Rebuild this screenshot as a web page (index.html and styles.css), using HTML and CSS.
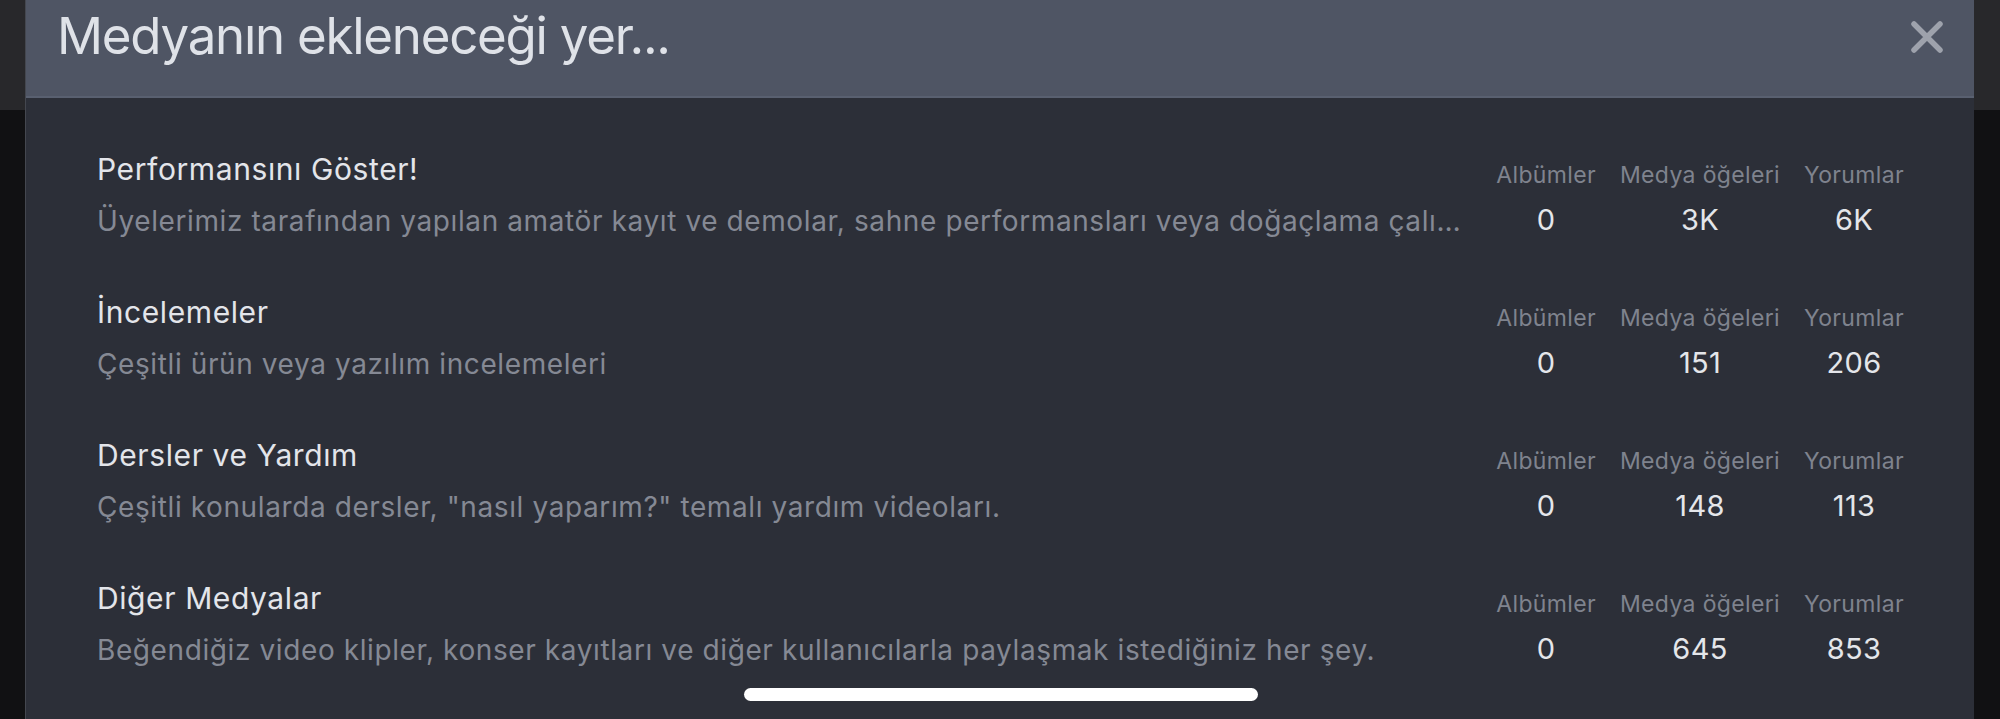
FILE: index.html
```
<!DOCTYPE html>
<html lang="tr">
<head>
<meta charset="utf-8">
<title>Medyanın ekleneceği yer...</title>
<link rel="stylesheet" href="styles.css">
</head>
<body>
<div class="backdrop">
  <div class="backdrop-bar"></div>
</div>
<div class="modal">
  <div class="modal-header">
    <h1 class="modal-title">Medyanın ekleneceği yer...</h1>
    <span class="close" aria-label="Kapat">
      <svg viewBox="0 0 34 34" width="34" height="34"><path d="M4 4 L30 30 M30 4 L4 30" stroke="#9ea2ac" stroke-width="5.5" stroke-linecap="round" fill="none"/></svg>
    </span>
  </div>
  <div class="modal-body">
    <div class="row">
      <div class="main">
        <div class="row-title">Performansını Göster!</div>
        <div class="row-desc">Üyelerimiz tarafından yapılan amatör kayıt ve demolar, sahne performansları veya doğaçlama çalı…</div>
      </div>
      <div class="stats">
        <div class="label">Albümler</div><div class="label">Medya öğeleri</div><div class="label">Yorumlar</div>
        <div class="value">0</div><div class="value">3K</div><div class="value">6K</div>
      </div>
    </div>
    <div class="row">
      <div class="main">
        <div class="row-title">İncelemeler</div>
        <div class="row-desc">Çeşitli ürün veya yazılım incelemeleri</div>
      </div>
      <div class="stats">
        <div class="label">Albümler</div><div class="label">Medya öğeleri</div><div class="label">Yorumlar</div>
        <div class="value">0</div><div class="value">151</div><div class="value">206</div>
      </div>
    </div>
    <div class="row">
      <div class="main">
        <div class="row-title">Dersler ve Yardım</div>
        <div class="row-desc">Çeşitli konularda dersler, "nasıl yaparım?" temalı yardım videoları.</div>
      </div>
      <div class="stats">
        <div class="label">Albümler</div><div class="label">Medya öğeleri</div><div class="label">Yorumlar</div>
        <div class="value">0</div><div class="value">148</div><div class="value">113</div>
      </div>
    </div>
    <div class="row">
      <div class="main">
        <div class="row-title">Diğer Medyalar</div>
        <div class="row-desc">Beğendiğiz video klipler, konser kayıtları ve diğer kullanıcılarla paylaşmak istediğiniz her şey.</div>
      </div>
      <div class="stats">
        <div class="label">Albümler</div><div class="label">Medya öğeleri</div><div class="label">Yorumlar</div>
        <div class="value">0</div><div class="value">645</div><div class="value">853</div>
      </div>
    </div>
  </div>
</div>
<div class="home-indicator"></div>
</body>
</html>
```
FILE: styles.css
```
html, body {
  margin: 0;
  padding: 0;
  width: 2000px;
  height: 719px;
  overflow: hidden;
  background: #111113;
  font-family: Inter, "Noto Sans", "Liberation Sans", sans-serif;
}
.backdrop {
  height: 719px;
}
.backdrop-bar {
  height: 110px;
  background: #28282b;
}
.modal {
  position: absolute;
  left: 25px;
  top: 0;
  width: 1949px;
  height: 740px;
  background: #2c2f38;
  border-left: 1px solid #44474f;
  box-sizing: border-box;
}
.modal-header {
  height: 98px;
  box-sizing: border-box;
  background: #4f5564;
  border-bottom: 2px solid #596070;
  display: flex;
  align-items: flex-start;
  justify-content: space-between;
  padding: 5px 30px 0 31px;
}
.modal-title {
  margin: 0;
  font-size: 51px;
  line-height: 62px;
  font-weight: 400;
  color: #dfe2e8;
  letter-spacing: -1.25px;
}
.close {
  display: block;
  width: 34px;
  height: 34px;
  margin-top: 15px;
}
.close svg { display: block; }
.modal-body {
  padding: 7px 70px 0 71px;
}
.row {
  display: flex;
  align-items: flex-start;
  height: 143px;
  gap: 22px;
}
.main {
  flex: 1;
  min-width: 0;
}
.row-title {
  font-size: 30px;
  line-height: 36px;
  padding-top: 46px;
  color: #e3e5ea;
  letter-spacing: 0.6px;
  white-space: nowrap;
}
.row-desc {
  font-size: 28px;
  line-height: 36px;
  margin-top: 16px;
  color: #858994;
  letter-spacing: 0.6px;
  white-space: nowrap;
  overflow: hidden;
  text-overflow: ellipsis;
}
.stats {
  display: grid;
  grid-template-columns: auto auto auto;
  column-gap: 24px;
  row-gap: 14px;
  padding-top: 56px;
  text-align: center;
}
.label {
  font-size: 23px;
  line-height: 28px;
  color: #7f838e;
  letter-spacing: 0.35px;
  white-space: nowrap;
}
.value {
  font-size: 29px;
  line-height: 34px;
  color: #e4e6ea;
  letter-spacing: 0.3px;
}
.home-indicator {
  position: absolute;
  left: 744px;
  top: 688px;
  width: 514px;
  height: 13px;
  border-radius: 7px;
  background: #ffffff;
}
```
